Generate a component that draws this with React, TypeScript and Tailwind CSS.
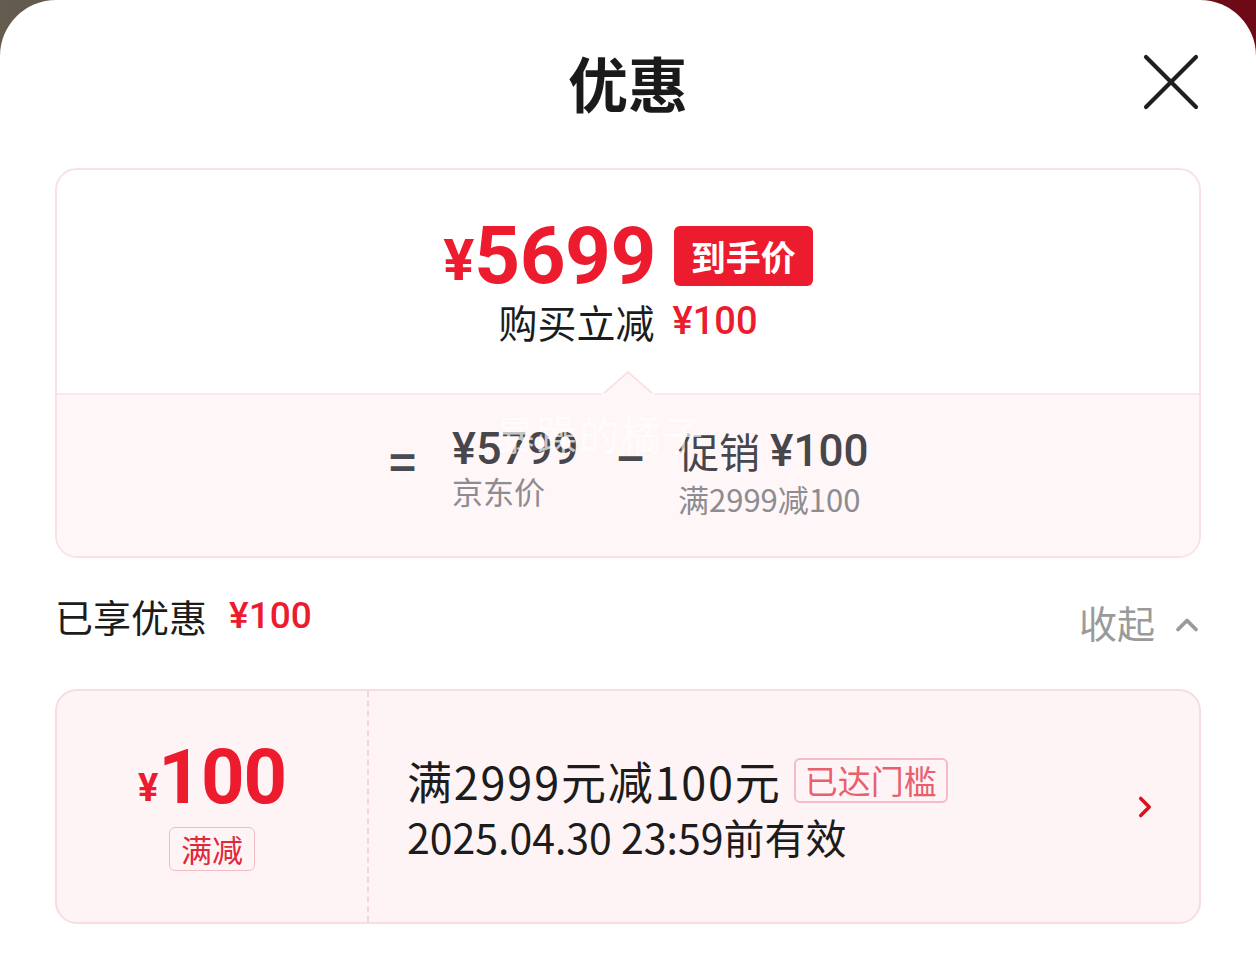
import { ChevronRight, ChevronUp, X } from 'lucide-react'

const cjk = { fontFamily: '"Noto Sans CJK SC", "Noto Sans", sans-serif' }
const num = { fontFamily: 'Roboto, "Noto Sans CJK SC", sans-serif' }

function PriceSummary() {
  return (
    <div className="mx-[55px] overflow-hidden rounded-[22px] border-2 border-[#fbe1e5]">
      <div className="flex h-[223px] flex-col items-center pt-[55px]">
        <div className="flex h-[62px] items-center">
          <span style={num} className="mt-[8px] text-[58px] leading-none font-bold text-[#ec1c2e]">¥</span>
          <span style={num} className="text-[80px] leading-none font-bold tracking-[-0.5px] text-[#ec1c2e]">5699</span>
          <span className="ml-[18px] flex h-[60px] w-[139px] items-center justify-center rounded-[6px] bg-[#ec1c2e] text-[35px] font-bold text-white">
            到手价
          </span>
        </div>
        <div className="mt-[12px] flex h-[44px] items-center">
          <span className="text-[39px] leading-none text-[#1c1c1c]">购买立减</span>
          <span style={num} className="ml-[18px] text-[38px] leading-none font-medium text-[#ec1c2e]">¥100</span>
        </div>
      </div>
      <div className="relative h-[163px] border-t-2 border-[#fbe6e9] bg-[#fff6f7]">
        <svg className="absolute left-1/2 top-[-25px] -translate-x-1/2" width="54" height="25" viewBox="0 0 54 25">
          <polygon points="1,25 27,2 53,25" fill="#fff6f7" stroke="#fbe1e5" strokeWidth="2" />
          <rect x="0" y="23" width="54" height="3" fill="#fff6f7" />
        </svg>
        <div className="flex justify-center pt-[28px]">
          <div className="mt-[14px] w-[28px] text-[46px] leading-none font-bold text-[#4a4a50]">=</div>
          <div className="ml-[35px] w-[127px]">
            <div style={num} className="h-[52px] whitespace-nowrap text-[45px] leading-[52px] font-medium text-[#46464c]">¥5799</div>
            <div className="mt-[-6px] text-[31px] leading-[44px] text-[#8c8c92]">京东价</div>
          </div>
          <div className="ml-[38px] mt-[10px] w-[28px] text-[46px] leading-none font-bold text-[#4a4a50]">−</div>
          <div className="ml-[33px] w-[189px]">
            <div className="flex h-[56px] items-center whitespace-nowrap text-[41px] text-[#46464c]">
              促销<span style={num} className="ml-[10px] text-[44px] font-medium">¥100</span>
            </div>
            <div className="whitespace-nowrap text-[31px] leading-[40px] text-[#8c8c92]">满2999减100</div>
          </div>
        </div>
        <div className="pointer-events-none absolute left-[438px] top-[8px] text-[40px] tracking-[2px] text-white/70">
          暴躁的橘子
        </div>
      </div>
    </div>
  )
}

function CouponCard() {
  return (
    <div className="mx-[55px] flex h-[235px] rounded-[22px] border-2 border-[#f6dde1] bg-[#fff4f5]">
      <div className="flex w-[310px] flex-col items-center pt-[50px]">
        <div className="flex items-end text-[#ec1c2e]">
          <span style={num} className="mb-[6px] text-[38px] leading-none font-bold">¥</span>
          <span style={num} className="text-[76px] leading-[72px] font-bold tracking-[-1px]">100</span>
        </div>
        <span className="mt-[14px] flex h-[44px] items-center rounded-[6px] border border-[#f2bcc4] px-[11px] text-[31px] text-[#e0283a]">
          满减
        </span>
      </div>
      <div className="w-0 border-l-2 border-dashed border-[#f1d7dc]" />
      <div className="flex flex-1 items-center pl-[38px] pr-[37px]">
        <div className="flex-1 pt-[2px]">
          <div className="flex items-center">
            <span className="text-[45px] leading-[54px] tracking-[1.8px] text-[#1c1c1c]">满2999元减100元</span>
            <span className="ml-[12px] flex h-[45px] items-center rounded-[6px] border-2 border-[#f4bcc4] px-[9px] text-[33px] text-[#e8606e]">
              已达门槛
            </span>
          </div>
          <div className="mt-[2px] text-[41px] leading-[52px] text-[#1c1c1c]">2025.04.30 23:59前有效</div>
        </div>
        <ChevronRight size={34} strokeWidth={2.5} className="text-[#d8151f]" />
      </div>
    </div>
  )
}

export default function App() {
  return (
    <div style={cjk} className="h-[957px] w-[1256px] bg-[linear-gradient(90deg,#645c4f_0%,#5a3a30_50%,#6e0916_100%)]">
      <div className="h-full rounded-t-[56px] bg-white">
        <div className="relative flex h-[168px] justify-center pt-[50px]">
          <h1 className="text-[60px] leading-[64px] font-bold text-[#1a1a1a]">优惠</h1>
          <X size={100} strokeWidth={1} className="absolute right-[35px] top-[32px] text-[#1f1f1f]" />
        </div>
        <PriceSummary />
        <div className="mx-[55px] flex h-[131px] items-start justify-between pt-[30px]">
          <div className="flex items-center">
            <span className="text-[38px] leading-[48px] text-[#1c1c1c]">已享优惠</span>
            <span style={num} className="ml-[22px] text-[37px] font-medium text-[#ec1c2e]">¥100</span>
          </div>
          <div className="mt-[10px] flex items-center text-[#9a9a9a]">
            <span className="text-[38px] leading-[48px]">收起</span>
            <ChevronUp size={36} strokeWidth={2.5} className="ml-[14px] mr-[-4px] mt-[6px]" />
          </div>
        </div>
        <CouponCard />
      </div>
    </div>
  )
}
